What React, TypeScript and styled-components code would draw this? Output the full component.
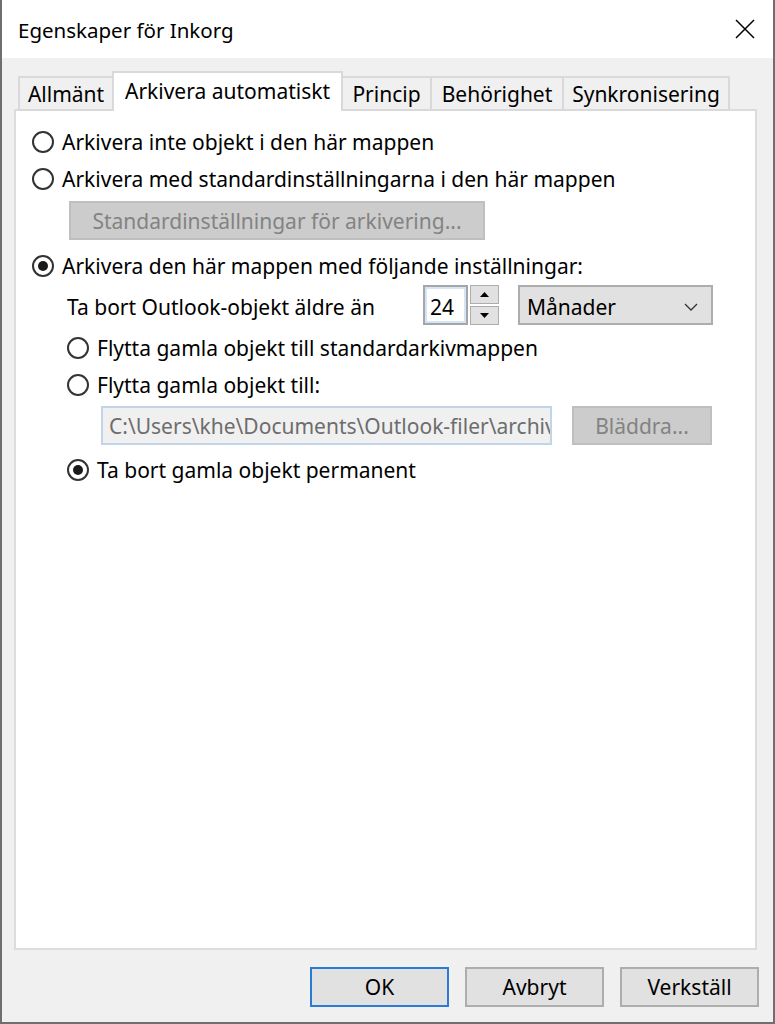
import React from 'react';
import styled, { createGlobalStyle } from 'styled-components';

const GlobalStyle = createGlobalStyle`
  html, body {
    margin: 0;
    padding: 0;
    background: #ffffff;
  }
  body {
    font-family: "Noto Sans", "Open Sans", sans-serif;
    color: #000000;
  }
  * {
    box-sizing: border-box;
  }
`;

const TABS = [
  { label: 'Allmänt', width: 96 },
  { label: 'Arkivera automatiskt', width: 231, active: true },
  { label: 'Princip', width: 91 },
  { label: 'Behörighet', width: 134 },
  { label: 'Synkronisering', width: 168 },
];

const ARCHIVE_PATH = 'C:\\Users\\khe\\Documents\\Outlook-filer\\archive.pst';

const Radio = ({ checked }: { checked?: boolean }) => (
  <RadioCircle>{checked && <RadioDot />}</RadioCircle>
);

const App = () => {
  return (
    <>
      <GlobalStyle />
      <Window>
        <TitleBar>
          <Title>Egenskaper för Inkorg</Title>
          <CloseButton aria-label="Stäng">
            <svg width="20" height="20" viewBox="0 0 20 20">
              <path d="M1 1 L19 19 M19 1 L1 19" stroke="#000" strokeWidth="1.5" fill="none" />
            </svg>
          </CloseButton>
        </TitleBar>

        <Content>
          <TabStrip>
            {TABS.map((tab) => (
              <Tab key={tab.label} $active={tab.active} $width={tab.width}>
                {tab.label}
              </Tab>
            ))}
          </TabStrip>

          <Panel>
            <RadioRow $top={12}>
              <Radio />
              <span>Arkivera inte objekt i den här mappen</span>
            </RadioRow>
            <RadioRow>
              <Radio />
              <span>Arkivera med standardinställningarna i den här mappen</span>
            </RadioRow>
            <DisabledButton $width={416} $indent={37} $top={4}>
              Standardinställningar för arkivering...
            </DisabledButton>
            <RadioRow $top={7}>
              <Radio checked />
              <span>Arkivera den här mappen med följande inställningar:</span>
            </RadioRow>

            <SettingsRow>
              <SettingsLabel>Ta bort Outlook-objekt äldre än</SettingsLabel>
              <NumberBox>24</NumberBox>
              <SpinColumn>
                <SpinButton>
                  <svg width="9" height="5" viewBox="0 0 9 5">
                    <path d="M0 5 L4.5 0 L9 5 Z" fill="#000" />
                  </svg>
                </SpinButton>
                <SpinButton>
                  <svg width="9" height="5" viewBox="0 0 9 5">
                    <path d="M0 0 L4.5 5 L9 0 Z" fill="#000" />
                  </svg>
                </SpinButton>
              </SpinColumn>
              <Select>
                <span>Månader</span>
                <svg width="14" height="8" viewBox="0 0 14 8">
                  <path d="M1 1 L7 7 L13 1" stroke="#333" strokeWidth="1.3" fill="none" />
                </svg>
              </Select>
            </SettingsRow>

            <RadioRow $indent={35} $top={4}>
              <Radio />
              <span>Flytta gamla objekt till standardarkivmappen</span>
            </RadioRow>
            <RadioRow $indent={35}>
              <Radio />
              <span>Flytta gamla objekt till:</span>
            </RadioRow>
            <PathRow>
              <PathInput type="text" readOnly value={ARCHIVE_PATH} />
              <DisabledButton $width={140}>Bläddra...</DisabledButton>
            </PathRow>
            <RadioRow $indent={35} $top={6}>
              <Radio checked />
              <span>Ta bort gamla objekt permanent</span>
            </RadioRow>
          </Panel>
        </Content>

        <Footer>
          <DialogButton $primary>OK</DialogButton>
          <DialogButton>Avbryt</DialogButton>
          <DialogButton>Verkställ</DialogButton>
        </Footer>
      </Window>
    </>
  );
};

export default App;

const Window = styled.div`
  width: 775px;
  height: 1024px;
  display: flex;
  flex-direction: column;
  background: #f0f0f0;
  border: 2px solid #6f6f6f;
  border-top: 0;
  font-size: 21px;
`;

const TitleBar = styled.div`
  height: 58px;
  flex: none;
  display: flex;
  align-items: center;
  justify-content: space-between;
  background: #ffffff;
  padding-left: 16px;
`;

const Title = styled.span`
  font-size: 20.5px;
  padding-top: 2px;
`;

const CloseButton = styled.div`
  width: 56px;
  height: 58px;
  display: flex;
  align-items: center;
  justify-content: center;
`;

const Content = styled.div`
  flex: 1;
  display: flex;
  flex-direction: column;
  padding: 15px 16px 0 12px;
`;

const TabStrip = styled.div`
  display: flex;
  align-items: flex-end;
  height: 38px;
  padding-left: 6px;
  margin-bottom: -2px;
  position: relative;
  z-index: 1;
`;

const Tab = styled.div<{ $active?: boolean; $width: number }>`
  width: ${(p) => p.$width}px;
  height: ${(p) => (p.$active ? 40 : 35)}px;
  display: flex;
  align-items: center;
  justify-content: center;
  padding-bottom: ${(p) => (p.$active ? 3 : 0)}px;
  padding-top: ${(p) => (p.$active ? 0 : 1)}px;
  background: ${(p) => (p.$active ? '#ffffff' : '#f0f0f0')};
  border: 2px solid #d9d9d9;
  border-bottom: ${(p) => (p.$active ? '0' : '2px solid #d9d9d9')};
  margin-left: -2px;
  white-space: nowrap;
`;

const Panel = styled.div`
  flex: 1;
  display: flex;
  flex-direction: column;
  align-items: flex-start;
  background: #ffffff;
  border: 2px solid #dcdcdc;
  padding-left: 16px;
`;

const RadioRow = styled.div<{ $indent?: number; $top?: number }>`
  height: 37px;
  display: flex;
  align-items: center;
  gap: 8px;
  margin-left: ${(p) => p.$indent ?? 0}px;
  margin-top: ${(p) => p.$top ?? 0}px;
  white-space: nowrap;
`;

const RadioCircle = styled.span`
  width: 22px;
  height: 22px;
  flex: none;
  border: 2px solid #333333;
  border-radius: 50%;
  display: flex;
  align-items: center;
  justify-content: center;
`;

const RadioDot = styled.span`
  width: 10px;
  height: 10px;
  border-radius: 50%;
  background: #1a1a1a;
`;

const DisabledButton = styled.div<{ $width: number; $indent?: number; $top?: number }>`
  width: ${(p) => p.$width}px;
  height: 39px;
  margin-left: ${(p) => p.$indent ?? 0}px;
  margin-top: ${(p) => p.$top ?? 0}px;
  display: flex;
  align-items: center;
  justify-content: center;
  background: #cccccc;
  border: 2px solid #bfbfbf;
  color: #838383;
  white-space: nowrap;
`;

const SettingsRow = styled.div`
  height: 40px;
  margin-top: 1px;
  margin-left: 35px;
  display: flex;
  align-items: center;
`;

const SettingsLabel = styled.span`
  width: 356px;
  padding-top: 4px;
  white-space: nowrap;
`;

const NumberBox = styled.div`
  width: 45px;
  height: 40px;
  display: flex;
  align-items: center;
  padding: 3px 0 0 5px;
  border: 2px solid #a6a6a6;
  box-shadow: inset 0 0 0 2px #d3e5f7;
  background: #ffffff;
`;

const SpinColumn = styled.div`
  width: 29px;
  height: 40px;
  margin-left: 2px;
  display: flex;
  flex-direction: column;
  gap: 2px;
`;

const SpinButton = styled.div`
  flex: 1;
  display: flex;
  align-items: center;
  justify-content: center;
  background: #e1e1e1;
  border: 1px solid #adadad;
`;

const Select = styled.div`
  width: 195px;
  height: 40px;
  margin-left: 19px;
  display: flex;
  align-items: center;
  justify-content: space-between;
  padding: 3px 13px 0 7px;
  background: #e1e1e1;
  border: 2px solid #adadad;
`;

const PathRow = styled.div`
  margin-top: 3px;
  margin-left: 69px;
  display: flex;
  align-items: center;
  gap: 20px;
`;

const PathInput = styled.input`
  width: 451px;
  height: 39px;
  margin: 0;
  padding: 0 0 0 6px;
  font: inherit;
  background: #f0f0f0;
  border: 2px solid #c2d4e8;
  color: #6d6d6d;
  outline: none;
`;

const Footer = styled.div`
  height: 72px;
  flex: none;
  display: flex;
  justify-content: flex-end;
  gap: 16px;
  padding: 17px 14px 0 0;
`;

const DialogButton = styled.div<{ $primary?: boolean }>`
  width: 139px;
  height: 40px;
  display: flex;
  align-items: center;
  justify-content: center;
  background: #e1e1e1;
  border: 2px solid ${(p) => (p.$primary ? '#2a7ad6' : '#adadad')};
`;
